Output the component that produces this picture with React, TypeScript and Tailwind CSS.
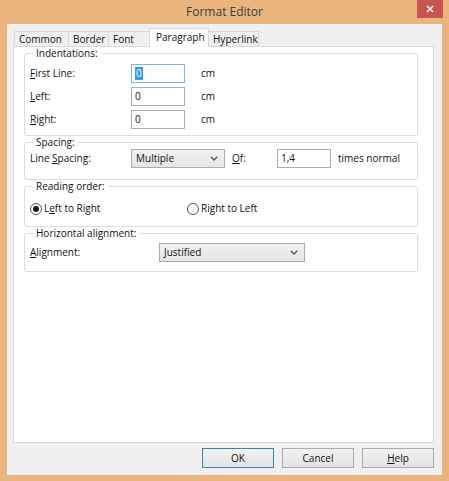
import React from "react";

const font = { fontFamily: '"Open Sans", "Noto Sans", sans-serif' };

const Chevron = () => (
  <svg width="8" height="5" viewBox="0 0 8 5" className="shrink-0">
    <polyline points="0.8,0.8 4,4 7.2,0.8" fill="none" stroke="#555" strokeWidth="1.3" />
  </svg>
);

const Tab = ({ label, width, active }: { label: string; width: string; active?: boolean }) =>
  active ? (
    <div
      className={`relative z-10 -mx-[1px] mb-[-1px] flex h-[19px] items-start border border-b-0 border-[#d9d9d9] bg-white pl-[6px] pt-[1px] ${width}`}
    >
      {label}
    </div>
  ) : (
    <div
      className={`flex h-[15px] items-center border border-b-0 border-[#d9d9d9] bg-[#f0f0f0] pl-[4px] [&+&]:border-l-0 ${width}`}
    >
      {label}
    </div>
  );

const Group = ({ title, className, children }: { title: string; className: string; children: React.ReactNode }) => (
  <fieldset className={`ml-[10px] mr-[15px] rounded-[3px] border border-[#dcdcdc] pl-[5px] ${className}`}>
    <legend className="ml-[3px] px-[3px] leading-[12px]">{title}</legend>
    {children}
  </fieldset>
);

const TextBox = ({ value, width, focused }: { value: string; width: string; focused?: boolean }) => (
  <div
    className={`flex h-[19px] items-center border px-[3px] ${width} ${
      focused ? "border-[#7eb4ea] bg-white" : "border-[#abadb3] bg-white"
    }`}
  >
    {focused ? <span className="bg-[#3399ff] px-[1px] leading-[13px] text-white">{value}</span> : value}
  </div>
);

const Select = ({ value, width }: { value: string; width: string }) => (
  <div
    className={`flex h-[19px] items-center justify-between border border-[#acacac] bg-gradient-to-b from-[#f2f2f2] to-[#e5e5e5] pl-[4px] pr-[6px] ${width}`}
  >
    <span>{value}</span>
    <Chevron />
  </div>
);

const Radio = ({ checked }: { checked?: boolean }) => (
  <span className="flex h-[12px] w-[12px] items-center justify-center rounded-full border border-[#555] bg-white">
    {checked && <span className="h-[6px] w-[6px] rounded-full bg-[#1a1a1a]" />}
  </span>
);

const Button = ({ children, primary }: { children: React.ReactNode; primary?: boolean }) => (
  <div
    className={`flex h-[20px] w-[72px] items-center justify-center border bg-gradient-to-b from-[#f2f2f2] to-[#e3e3e3] ${
      primary ? "border-[#3c7fb1]" : "border-[#acacac]"
    }`}
  >
    {children}
  </div>
);

export default function App() {
  return (
    <div className="flex h-[481px] w-[449px] flex-col bg-[#ebb47e] text-[10px] text-[#111]" style={font}>
      <div className="relative flex h-[24px] shrink-0 items-center justify-center text-[12px] text-[#3c3c3c]">
        Format Editor
        <div className="absolute right-[6px] top-0 flex h-[18px] w-[26px] items-center justify-center bg-[#c85450]">
          <svg width="8" height="8" viewBox="0 0 8 8">
            <path d="M1 1 L7 7 M7 1 L1 7" stroke="#fff" strokeWidth="1.6" />
          </svg>
        </div>
      </div>

      <div className="mx-[7px] flex h-[451px] flex-col bg-[#f0f0f0] pl-[6px] pr-[8px] pt-[4px]">
        <div className="flex items-end pl-[1px]">
          <Tab label="Common" width="w-[55px]" />
          <Tab label="Border" width="w-[40px]" />
          <Tab label="Font" width="w-[41px]" />
          <Tab label="Paragraph" width="w-[60px]" active />
          <Tab label="Hyperlink" width="w-[51px]" />
        </div>

        <div className="flex h-[397px] flex-col border border-[#d9d9d9] bg-white">
          <Group title="Indentations:" className="pb-[6px]">
            <div className="flex flex-col gap-[4px] pt-[5px]">
              {[
                ["F", "irst Line:", true],
                ["L", "eft:", false],
                ["R", "ight:", false],
              ].map(([k, rest, f]) => (
                <div key={k as string} className="flex items-center">
                  <span className="w-[101px]">
                    <u>{k}</u>
                    {rest}
                  </span>
                  <TextBox value="0" width="w-[54px]" focused={f as boolean} />
                  <span className="ml-[16px]">cm</span>
                </div>
              ))}
            </div>
          </Group>

          <Group title="Spacing:" className="mt-[0px] pb-[11px]">
            <div className="flex items-center pt-[1px]">
              <span className="w-[101px]">
                Line <u>S</u>pacing:
              </span>
              <Select value="Multiple" width="w-[94px]" />
              <span className="ml-[7px] w-[45px]">
                <u>O</u>f:
              </span>
              <TextBox value="1,4" width="w-[54px]" />
              <span className="ml-[7px]">times normal</span>
            </div>
          </Group>

          <Group title="Reading order:" className="pb-[10px]">
            <div className="flex items-center pt-[9px]">
              <div className="flex w-[157px] items-center gap-[2px]">
                <Radio checked />
                <span>
                  L<u>e</u>ft to Right
                </span>
              </div>
              <div className="flex items-center gap-[2px]">
                <Radio />
                <span>Right to Left</span>
              </div>
            </div>
          </Group>

          <Group title="Horizontal alignment:" className="pb-[9px]">
            <div className="flex items-center pt-[4px]">
              <span className="w-[129px]">
                <u>A</u>lignment:
              </span>
              <Select value="Justified" width="w-[146px]" />
            </div>
          </Group>
        </div>

        <div className="mt-[5px] flex justify-end gap-[8px]">
          <Button primary>OK</Button>
          <Button>Cancel</Button>
          <Button>
            <span>
              <u>H</u>elp
            </span>
          </Button>
        </div>
      </div>
    </div>
  );
}
